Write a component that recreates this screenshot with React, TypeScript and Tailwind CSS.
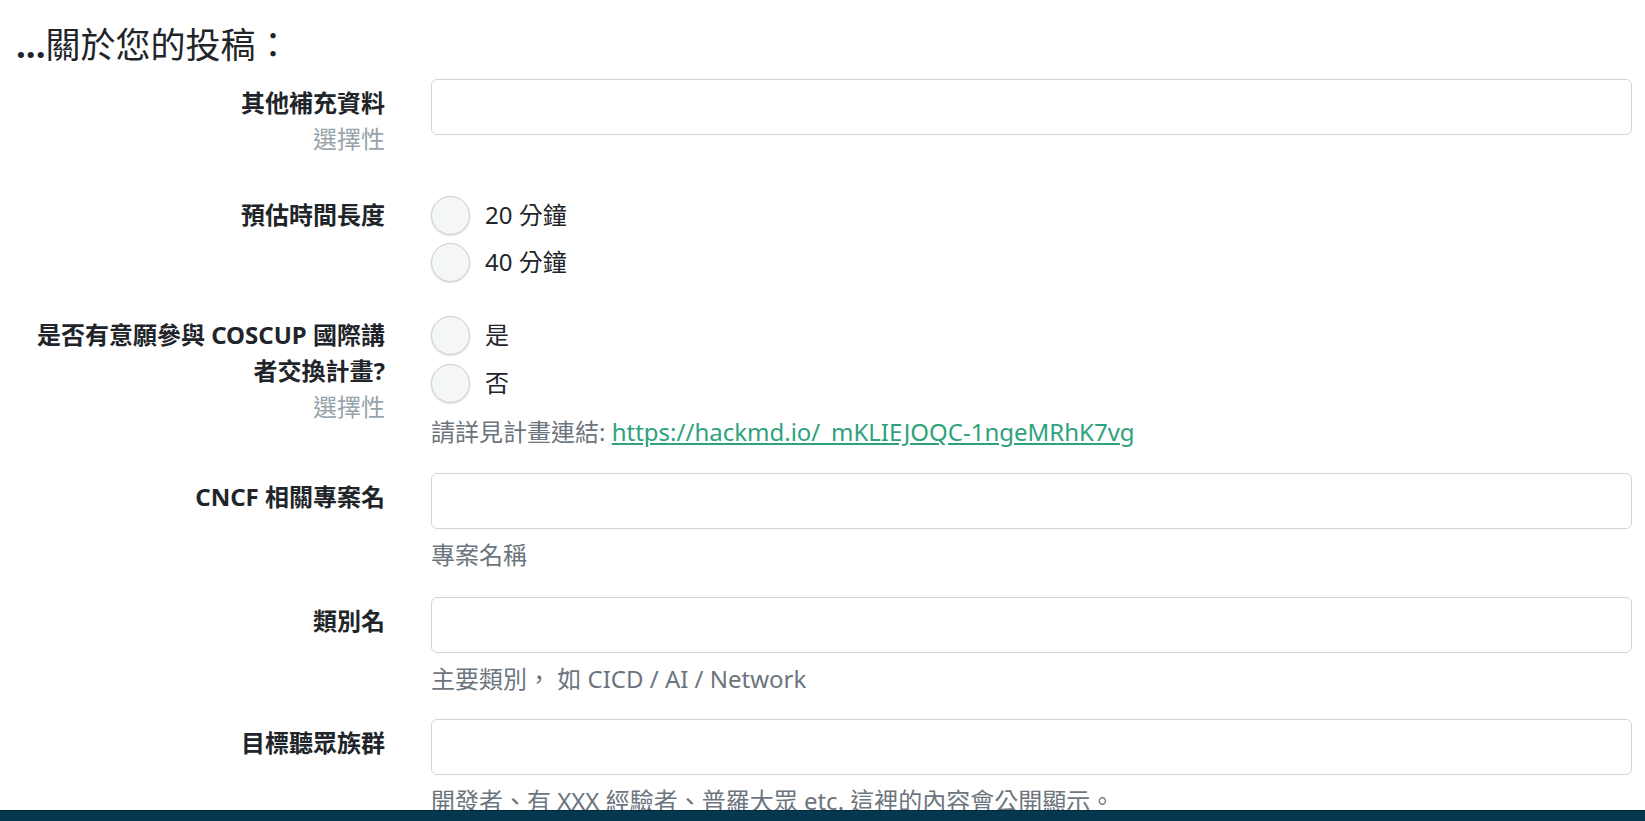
const font = {
  fontFamily: '"Noto Sans", "Noto Sans CJK TC", sans-serif',
};

function Radio({ label }: { label: string }) {
  return (
    <label className="flex items-center h-[36px] text-[24px] leading-[36px] text-[#212529]">
      <span className="w-[39px] h-[39px] rounded-full bg-[#f4f6f8] border border-[#c9cfd3] shadow-[0_1px_2px_rgba(0,0,0,0.12)] shrink-0" />
      <span className="ml-[15px]">{label}</span>
    </label>
  );
}

function Label({ title, optional }: { title: string[]; optional?: boolean }) {
  return (
    <div className="text-right text-[24px] leading-[36px] pl-[15px]">
      {title.map((t) => (
        <div key={t} className="font-bold text-[#212529] whitespace-nowrap">
          {t}
        </div>
      ))}
      {optional && <div className="text-[#98a4ab]">選擇性</div>}
    </div>
  );
}

function TextRow({ title, help, optional, className }: { title: string; help?: string; optional?: boolean; className?: string }) {
  return (
    <div className={"grid grid-cols-[385px_1fr] gap-x-[46px] " + (className ?? "")}>
      <div className="pt-[6px]">
        <Label title={[title]} optional={optional} />
      </div>
      <div>
        <input className="w-full h-[56px] rounded-[6px] border border-[#d1d5db] bg-white outline-none" />
        {help && <p className="mt-[8px] text-[24px] leading-[36px] text-[#6c757d]">{help}</p>}
      </div>
    </div>
  );
}

export default function App() {
  return (
    <div className="relative h-screen overflow-hidden bg-white" style={font}>
      <div className="pr-[13px] pt-[24px]">
        <h2 className="pl-[16px] text-[35px] leading-[42px] text-[#212529]">
          <strong>...</strong>關於您的投稿：
        </h2>

        <TextRow title="其他補充資料" optional className="mt-[13px]" />

        <div className="grid grid-cols-[385px_1fr] gap-x-[46px] mt-[40px]">
          <Label title={["預估時間長度"]} />
          <div className="flex flex-col gap-[11px]">
            <Radio label="20 分鐘" />
            <Radio label="40 分鐘" />
          </div>
        </div>

        <div className="grid grid-cols-[385px_1fr] gap-x-[46px] mt-[37px]">
          <Label title={["是否有意願參與 COSCUP 國際講", "者交換計畫?"]} optional />
          <div>
            <div className="flex flex-col gap-[12px]">
              <Radio label="是" />
              <Radio label="否" />
            </div>
            <p className="mt-[13px] text-[24px] leading-[36px] text-[#6c757d]">
              請詳見計畫連結:{" "}
              <a href="#" className="text-[#2ea27c] underline">
                https://hackmd.io/_mKLIEJOQC-1ngeMRhK7vg
              </a>
            </p>
          </div>
        </div>

        <TextRow title="CNCF 相關專案名" help="專案名稱" className="mt-[23px]" />
        <TextRow title="類別名" help="主要類別， 如 CICD / AI / Network" className="mt-[24px]" />
        <TextRow title="目標聽眾族群" help="開發者、有 XXX 經驗者、普羅大眾 etc. 這裡的內容會公開顯示。" className="mt-[22px]" />
      </div>

      <div className="fixed bottom-0 left-0 right-0 h-[11px] bg-[#05374f] border-t border-[#022a3c]" />
    </div>
  );
}
